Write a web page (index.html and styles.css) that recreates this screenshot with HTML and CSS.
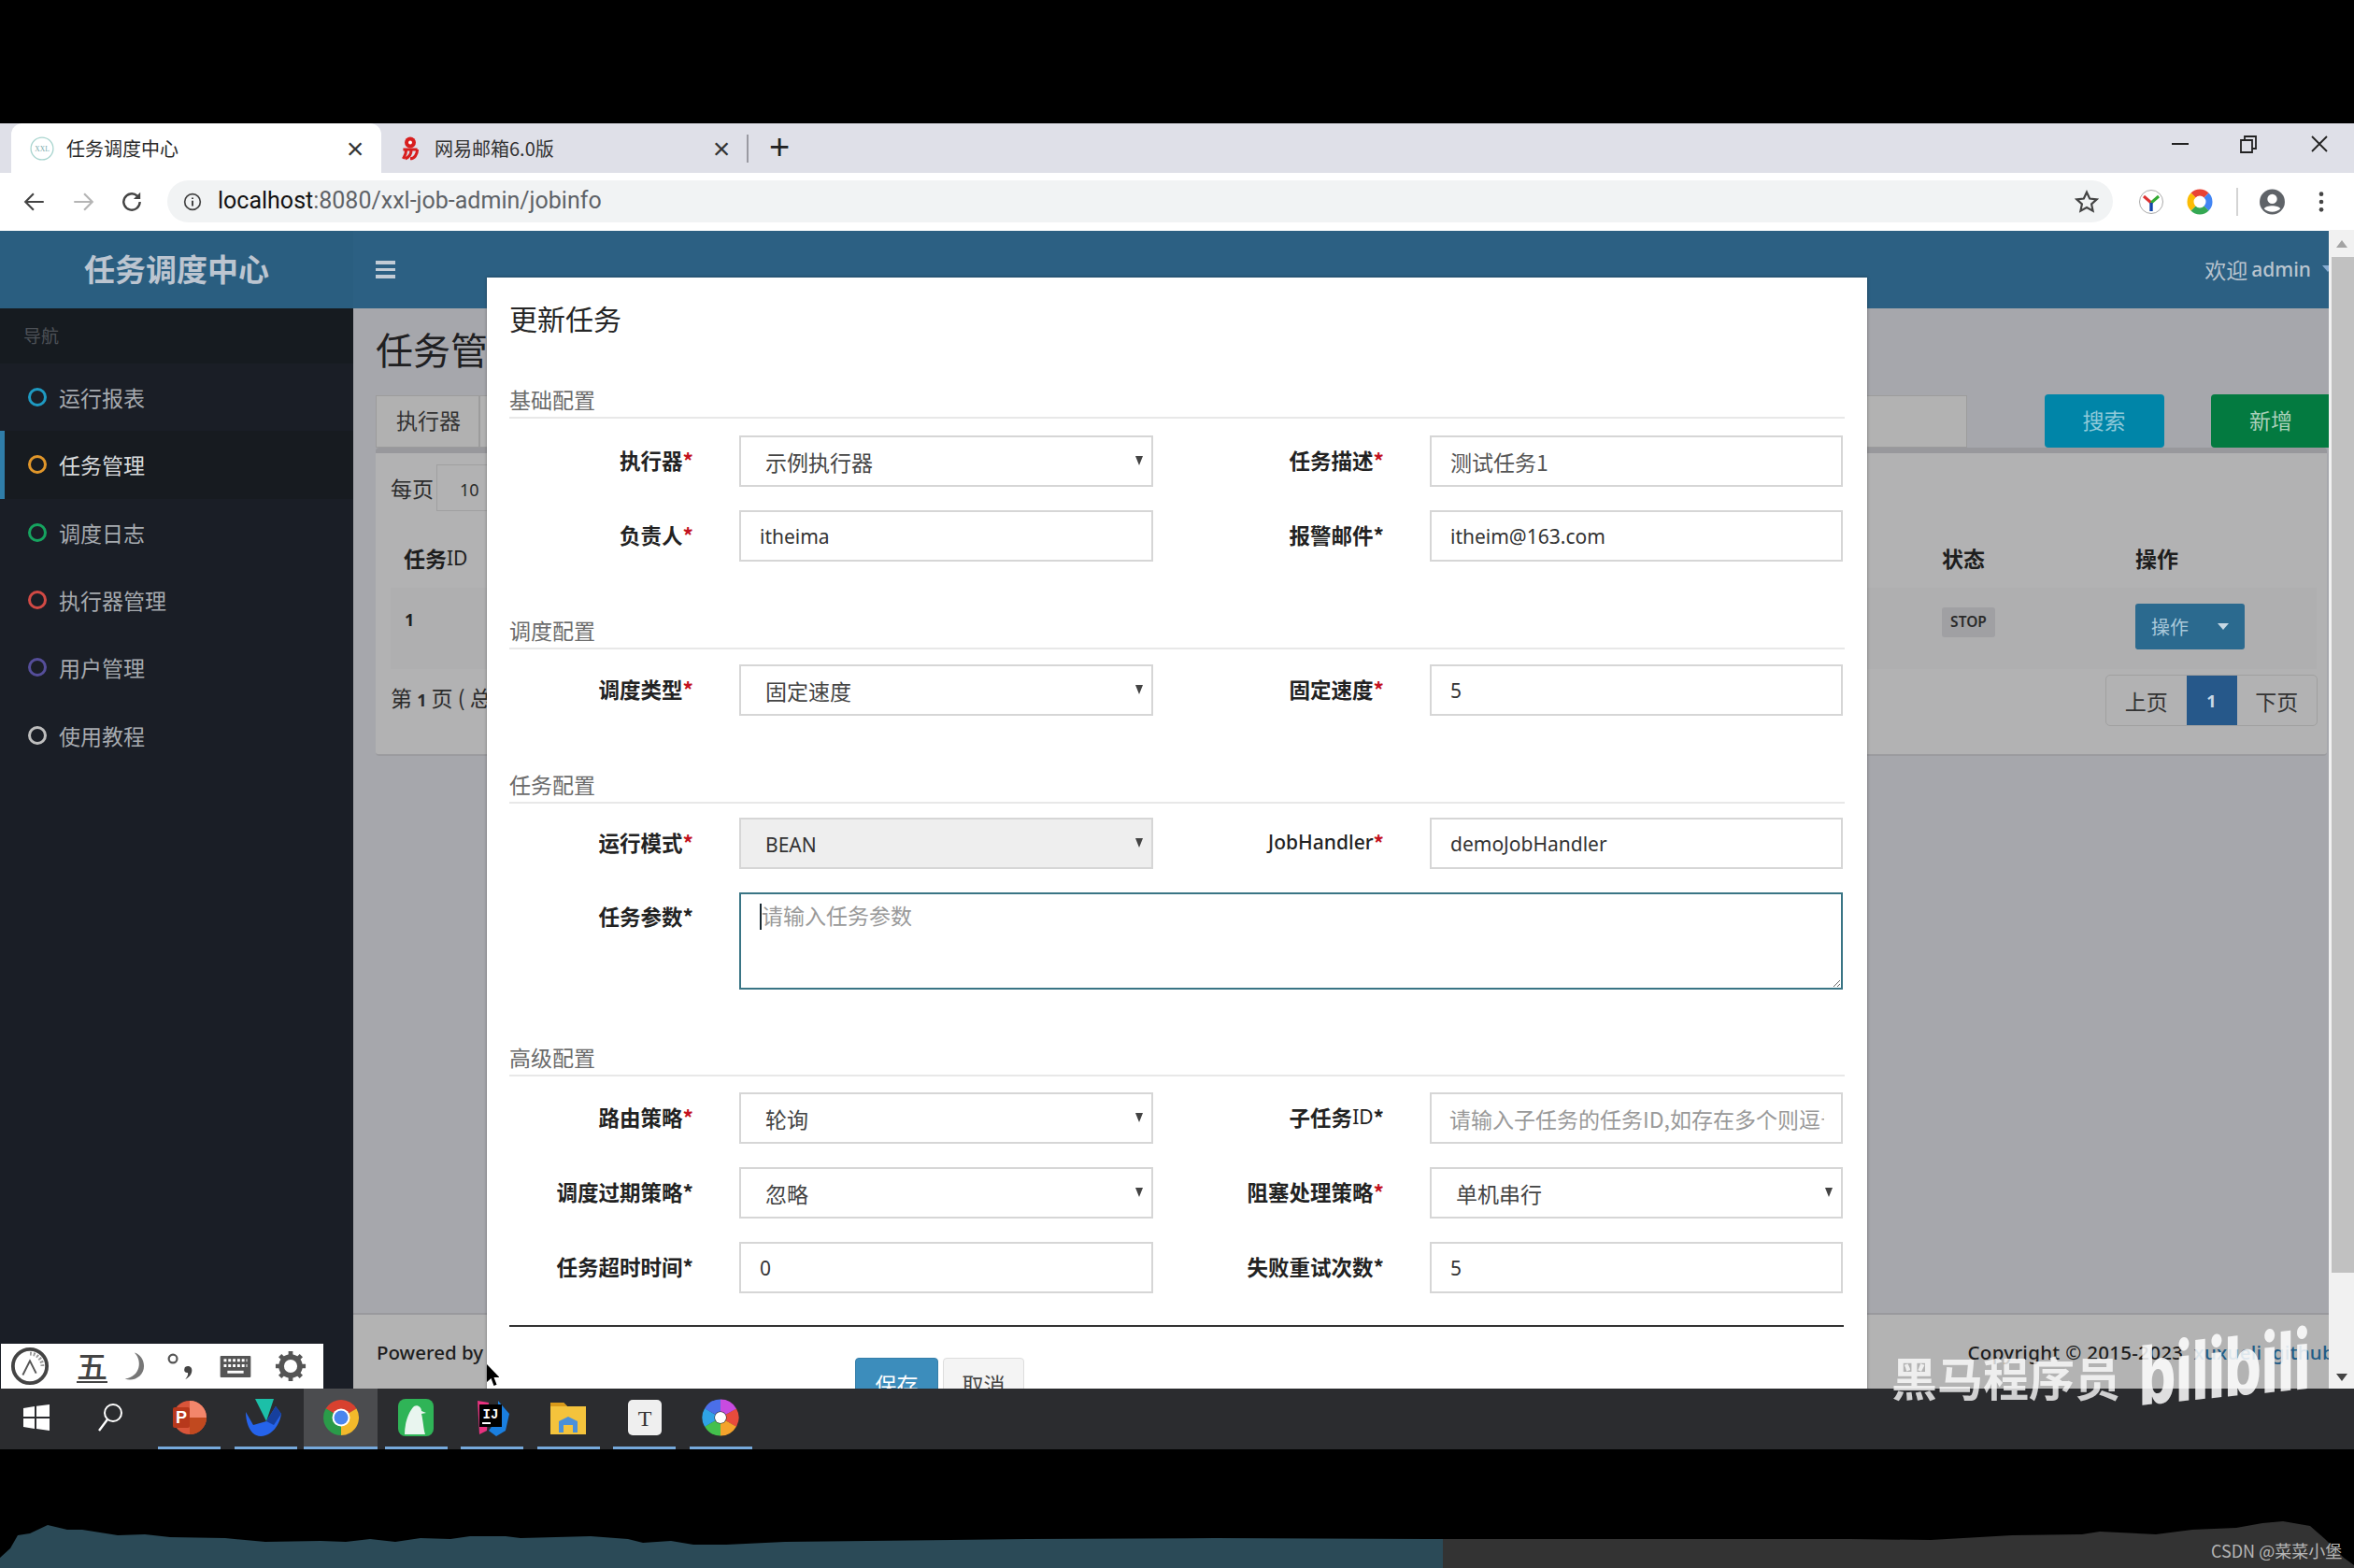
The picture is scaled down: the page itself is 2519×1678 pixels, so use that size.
FILE: index.html
```html
<!DOCTYPE html>
<html lang="zh">
<head>
<meta charset="utf-8">
<title>任务调度中心</title>
<link rel="stylesheet" href="styles.css">
</head>
<body>
<div class="screen">
  <div class="letterbox-top"></div>

  <div class="tabstrip">
    <div class="tab tab-active">
      <svg class="favicon" viewBox="0 0 24 24"><circle cx="12" cy="12" r="11" fill="#fff" stroke="#a9d5cf" stroke-width="1.2"/><text x="12" y="15" font-size="7" text-anchor="middle" fill="#7aa" font-family="Liberation Serif">XXL</text></svg>
      <span class="tab-title">任务调度中心</span>
      <span class="tab-close">×</span>
    </div>
    <div class="tab">
      <svg class="favicon" viewBox="0 0 24 24"><circle cx="12" cy="6" r="5.500" fill="#d81e1e"/><circle cx="12" cy="6" r="1.800" fill="#fff"/><path d="M5 13h14M8 13c0 5-2 7-3 9M13 13c0 5-3 8-6 9M19 13c0 5-3 9-7 9" stroke="#d81e1e" stroke-width="2.800" fill="none"/></svg>
      <span class="tab-title">网易邮箱6.0版</span>
      <span class="tab-close">×</span>
    </div>
    <span class="tab-divider"></span>
    <span class="tab-new">+</span>
    <div class="window-controls">
      <svg class="win-min" viewBox="0 0 20 20"><path d="M1 10h18" stroke="#222" stroke-width="2"/></svg>
      <svg class="win-max" viewBox="0 0 20 20"><path d="M2 6h12v13H2zM6 6V2h12v13h-4" fill="none" stroke="#222" stroke-width="1.800"/></svg>
      <svg class="win-close" viewBox="0 0 20 20"><path d="M2 2l16 16M18 2L2 18" stroke="#222" stroke-width="1.800"/></svg>
    </div>
  </div>

  <div class="toolbar">
    <svg class="nav-icon" viewBox="0 0 24 24"><path d="M21 12H4M11 4l-8 8 8 8" fill="none" stroke="#444" stroke-width="2"/></svg>
    <svg class="nav-icon" viewBox="0 0 24 24"><path d="M3 12h17M13 4l8 8-8 8" fill="none" stroke="#b5b5b5" stroke-width="2"/></svg>
    <svg class="nav-icon" viewBox="0 0 24 24"><path d="M20 12a8 8 0 1 1-2.600-5.900" fill="none" stroke="#444" stroke-width="2.200"/><path d="M20.500 2.500v6.700h-6.700z" fill="#444"/></svg>
    <div class="omnibox">
      <svg class="info-icon" viewBox="0 0 24 24"><circle cx="12" cy="12" r="10" fill="none" stroke="#444" stroke-width="2"/><path d="M12 10.500v7M12 6.500v2" stroke="#444" stroke-width="2.400"/></svg>
      <span class="url"><span class="url-host">localhost</span>:8080/xxl-job-admin/jobinfo</span>
      <svg class="star" viewBox="0 0 24 24"><path d="M12 2.500l2.900 6.300 6.900.8-5.100 4.600 1.400 6.800-6.100-3.400-6.100 3.400 1.400-6.800L2.200 9.600l6.900-.8z" fill="none" stroke="#444" stroke-width="2"/></svg>
    </div>
    <svg class="ext ext-y" viewBox="0 0 28 28"><circle cx="14" cy="14" r="12.500" fill="#fff" stroke="#aaa"/><path d="M14 15L6 8" stroke="#d33" stroke-width="3"/><path d="M14 15L22 8" stroke="#3a3" stroke-width="3"/><path d="M14 15v9" stroke="#14a" stroke-width="3.400"/></svg>
    <svg class="ext ext-ring" viewBox="0 0 28 28"><g fill="none" stroke-width="7"><circle cx="14" cy="14" r="10" stroke="#e94335" stroke-dasharray="15.700 47.100" transform="rotate(-135 14 14)"/><circle cx="14" cy="14" r="10" stroke="#4285f4" stroke-dasharray="15.700 47.100" transform="rotate(-45 14 14)"/><circle cx="14" cy="14" r="10" stroke="#34a853" stroke-dasharray="15.700 47.100" transform="rotate(45 14 14)"/><circle cx="14" cy="14" r="10" stroke="#fbbc05" stroke-dasharray="15.700 47.100" transform="rotate(135 14 14)"/></g></svg>
    <span class="toolbar-divider"></span>
    <svg class="ext ext-user" viewBox="0 0 28 28"><circle cx="14" cy="14" r="13" fill="#5f6368"/><circle cx="14" cy="11" r="5" fill="#fff"/><path d="M5.500 21c2-4 15-4 17 0-4 4.500-13 4.500-17 0z" fill="#fff"/></svg>
    <svg class="ext ext-dots" viewBox="0 0 8 28"><circle cx="4" cy="5" r="2.500" fill="#444"/><circle cx="4" cy="14" r="2.500" fill="#444"/><circle cx="4" cy="23" r="2.500" fill="#444"/></svg>
  </div>

  <div class="viewport">
    <div class="app">
      <header class="topbar">
        <div class="brand">任务调度中心</div>
        <div class="toggle"><i></i><i></i><i></i></div>
        <div class="user">欢迎 <b>admin</b> <span class="user-caret"></span></div>
      </header>
      <div class="app-body">
        <nav class="sidebar">
          <div class="side-head">导航</div>
          <a class="side-item"><span class="ring ring-cyan"></span>运行报表</a>
          <a class="side-item side-active"><span class="ring ring-orange"></span>任务管理</a>
          <a class="side-item"><span class="ring ring-green"></span>调度日志</a>
          <a class="side-item"><span class="ring ring-red"></span>执行器管理</a>
          <a class="side-item"><span class="ring ring-purple"></span>用户管理</a>
          <a class="side-item"><span class="ring ring-white"></span>使用教程</a>
        </nav>
        <main class="main">
          <div class="content">
            <h1 class="page-title">任务管理</h1>
            <div class="filters">
              <div class="filter-label">执行器</div>
              <div class="filter-input"></div>
              <button class="btn-search">搜索</button>
              <button class="btn-add">新增</button>
            </div>
            <section class="card">
              <div class="perpage">每页<span class="perpage-box">10</span></div>
              <div class="table">
                <div class="th th-id">任务<span class="thin">ID</span></div>
                <div class="th">状态</div>
                <div class="th">操作</div>
                <div class="td td-id">1</div>
                <div class="td td-stop"><span class="stop">STOP</span></div>
                <div class="td"><span class="op-btn">操作<i class="op-caret"></i></span></div>
              </div>
              <div class="table-foot">
                <div class="page-info">第 <b>1</b> 页 ( 总共 1 页，1 条记录 )</div>
                <div class="pager"><span class="pg">上页</span><span class="pg pg-on">1</span><span class="pg">下页</span></div>
              </div>
            </section>
          </div>
          <footer class="footer">
            <div class="powered">Powered by <b>XXL-JOB</b> 2.4.0</div>
            <div class="copy">Copyright © 2015-2023 &nbsp;<a>xuxueli</a> &nbsp;<a>github</a></div>
          </footer>
        </main>
      </div>
    </div>
    <div class="scrollbar">
      <span class="sb-arrow"><i class="sb-up"></i></span>
      <span class="sb-thumb"></span>
      <span class="sb-arrow sb-arrow-end"><i class="sb-down"></i></span>
    </div>

    <div class="modal">
      <h2 class="modal-title">更新任务</h2>

      <div class="section section-first">
        <div class="section-head">基础配置</div>
        <div class="form-grid">
          <label class="lab">执行器<em>*</em></label>
          <div class="sel"><select><option>示例执行器</option></select></div>
          <label class="lab">任务描述<em>*</em></label>
          <input class="ctl ctl-cjk" value="测试任务1">
          <label class="lab">负责人<em>*</em></label>
          <input class="ctl" value="itheima">
          <label class="lab">报警邮件*</label>
          <input class="ctl" value="itheim@163.com">
        </div>
      </div>

      <div class="section">
        <div class="section-head">调度配置</div>
        <div class="form-grid">
          <label class="lab">调度类型<em>*</em></label>
          <div class="sel"><select><option>固定速度</option></select></div>
          <label class="lab">固定速度<em>*</em></label>
          <input class="ctl" value="5">
        </div>
      </div>

      <div class="section section-tight">
        <div class="section-head">任务配置</div>
        <div class="form-grid">
          <label class="lab">运行模式<em>*</em></label>
          <div class="sel sel-off"><select disabled><option>BEAN</option></select></div>
          <label class="lab"><span class="lab-latin">JobHandler</span><em>*</em></label>
          <input class="ctl" value="demoJobHandler">
          <label class="lab lab-top">任务参数*</label>
          <div class="area-wrap"><textarea class="area" placeholder="请输入任务参数"></textarea><span class="caret"></span></div>
        </div>
      </div>

      <div class="section section-last">
        <div class="section-head">高级配置</div>
        <div class="form-grid">
          <label class="lab">路由策略<em>*</em></label>
          <div class="sel"><select><option>轮询</option></select></div>
          <label class="lab">子任务<span class="lab-thin">ID</span>*</label>
          <input class="ctl ctl-cjk ctl-hold" placeholder="请输入子任务的任务ID,如存在多个则逗号分隔">
          <label class="lab">调度过期策略*</label>
          <div class="sel"><select><option>忽略</option></select></div>
          <label class="lab">阻塞处理策略<em>*</em></label>
          <div class="sel"><select><option>单机串行</option></select></div>
          <label class="lab">任务超时时间*</label>
          <input class="ctl" value="0">
          <label class="lab">失败重试次数*</label>
          <input class="ctl" value="5">
        </div>
      </div>

      <hr class="modal-rule">
      <div class="modal-actions">
        <button class="btn-save">保存</button>
        <button class="btn-cancel">取消</button>
      </div>
    </div>

    <div class="ime">
      <svg class="ime-clock" viewBox="0 0 44 44"><circle cx="22" cy="22" r="19" fill="#fff" stroke="#444" stroke-width="4"/><path d="M22 8a14 14 0 0 1 14 14" fill="none" stroke="#999" stroke-width="4" stroke-dasharray="2 2"/><path d="M14 32l8-16 7 14" fill="none" stroke="#555" stroke-width="2"/></svg>
      <span class="ime-wu">五</span>
      <svg class="ime-moon" viewBox="0 0 30 40"><path d="M16 3c10 10 8 30-12 33 12 4 24-4 24-16C28 12 23 5 16 3z" fill="#777"/></svg>
      <svg class="ime-punct" viewBox="0 0 34 36"><circle cx="8" cy="9" r="5" fill="none" stroke="#555" stroke-width="2.500"/><path d="M26 18c4 0 5 3 5 5 0 6-5 9-8 11 2-3 4-5 3-8-3 0-5-2-4-5 0-2 2-3 4-3z" fill="#444"/></svg>
      <svg class="ime-keys" viewBox="0 0 36 26"><rect x="1" y="1" width="34" height="24" fill="#555" rx="1"/><path d="M5 6h26M5 12h26" stroke="#fff" stroke-width="3" stroke-dasharray="3 2"/><path d="M9 19h18" stroke="#fff" stroke-width="3"/></svg>
      <svg class="ime-gear" viewBox="0 0 36 36"><circle cx="18" cy="18" r="10.500" fill="none" stroke="#555" stroke-width="6"/><path d="M18 1v7M18 28v7M1 18h7M28 18h7M6 6l5 5M25 25l5 5M30 6l-5 5M11 25l-5 5" stroke="#555" stroke-width="5"/></svg>
    </div>

    <svg class="cursor" viewBox="0 0 14 24"><path d="M1 0v19l4.500-4 3 8 3-1.300-3-7.700h6z" fill="#000"/></svg>
  </div>

  <div class="taskbar">
    <div class="tb-start">
      <svg class="tb-win" viewBox="0 0 28 28"><path d="M0 4l12-2v11H0zM14 1.700L28 0v13H14zM0 15h12v11L0 24zM14 15h14v13l-14-2z" fill="#fff"/></svg>
    </div>
    <div class="tb-search">
      <svg class="tb-glass" viewBox="0 0 28 32"><circle cx="17" cy="11" r="9" fill="none" stroke="#fff" stroke-width="2"/><path d="M11 18L2 30" stroke="#fff" stroke-width="2.400"/></svg>
    </div>
    <div class="slot">
      <svg class="app" viewBox="0 0 40 40"><circle cx="20" cy="20" r="18" fill="#d9553a"/><path d="M20 2a18 18 0 0 1 18 18H20z" fill="#f3866b"/><path d="M20 20h18a18 18 0 0 1-18 18z" fill="#c1491f"/><rect x="2" y="9" width="18" height="22" rx="2" fill="#b7381c"/><text x="11" y="26" font-size="18" font-weight="700" text-anchor="middle" fill="#fff" font-family="Liberation Sans">P</text></svg>
    </div>
    <div class="slot">
      <svg class="app app-left" viewBox="0 0 40 40"><path d="M12 0h20l-8 24z" fill="#1cbfa8"/><path d="M2 14l8 14 14-4L34 8l6 8c-2 14-12 24-22 24C8 40 2 28 2 14z" fill="#2563eb"/><path d="M24 24L34 8l6 8-8 12z" fill="#163f9d"/></svg>
    </div>
    <div class="slot slot-active">
      <svg class="app" viewBox="0 0 40 40"><g fill="none" stroke-width="12"><circle cx="20" cy="20" r="13" stroke="#d8412f" stroke-dasharray="27.230 54.460" transform="rotate(-150 20 20)"/><circle cx="20" cy="20" r="13" stroke="#f2b92b" stroke-dasharray="27.230 54.460" transform="rotate(-30 20 20)"/><circle cx="20" cy="20" r="13" stroke="#2a9b49" stroke-dasharray="27.230 54.460" transform="rotate(90 20 20)"/></g><circle cx="20" cy="20" r="9.500" fill="#fff"/><circle cx="20" cy="20" r="7.500" fill="#4a85ee"/></svg>
    </div>
    <div class="slot">
      <svg class="app" viewBox="0 0 40 40"><rect x="1" y="0" width="38" height="40" rx="8" fill="#2fb457"/><path d="M18 8c4-2 8 1 8 5l5 2-5 1c2 8 2 16 4 22H8c0-12 4-24 10-30z" fill="#e9f5ef"/></svg>
    </div>
    <div class="slot">
      <svg class="app" viewBox="0 0 40 40"><path d="M4 2l12 2-2 30-8 4z" fill="#e8327f"/><path d="M26 2l12 14-4 18-10 6-8-6 10-14z" fill="#1a7fe0"/><rect x="6" y="6" width="24" height="24" fill="#000"/><text x="18" y="21" font-size="14" font-weight="700" text-anchor="middle" fill="#fff" font-family="Liberation Mono">IJ</text><rect x="9" y="25" width="9" height="2" fill="#fff"/></svg>
    </div>
    <div class="slot">
      <svg class="app" viewBox="0 0 40 40"><path d="M1 4h14l4 4h20v30H1z" fill="#f4c33c"/><path d="M1 4h14l4 4H1z" fill="#d99a1a"/><path d="M10 36V24l10-5 10 5v12z" fill="#4a90d9"/><rect x="15" y="28" width="10" height="8" fill="#f4c33c"/></svg>
    </div>
    <div class="slot">
      <svg class="app" viewBox="0 0 40 40"><rect x="2" y="1" width="36" height="38" rx="5" fill="#efefef"/><text x="20" y="29" font-size="24" text-anchor="middle" fill="#333" font-family="Liberation Serif">T</text></svg>
    </div>
    <div class="slot">
      <svg class="app" viewBox="0 0 40 40"><g fill="none" stroke-width="13"><circle cx="20" cy="20" r="13" stroke="#e84b3c" stroke-dasharray="13.610 68.070" transform="rotate(-30 20 20)"/><circle cx="20" cy="20" r="13" stroke="#f4a32c" stroke-dasharray="13.610 68.070" transform="rotate(30 20 20)"/><circle cx="20" cy="20" r="13" stroke="#43c04c" stroke-dasharray="13.610 68.070" transform="rotate(90 20 20)"/><circle cx="20" cy="20" r="13" stroke="#2fa3e6" stroke-dasharray="13.610 68.070" transform="rotate(150 20 20)"/><circle cx="20" cy="20" r="13" stroke="#4b6fe8" stroke-dasharray="13.610 68.070" transform="rotate(210 20 20)"/><circle cx="20" cy="20" r="13" stroke="#c84be0" stroke-dasharray="13.610 68.070" transform="rotate(270 20 20)"/></g><circle cx="20" cy="20" r="6" fill="#fff"/></svg>
    </div>
  </div>

  <div class="letterbox-bottom">
    <svg class="wave" viewBox="0 0 2519 127" preserveAspectRatio="none">
      <path fill="#2b4a57" d="M0 116L11 106 19 92 32 90 51 81 72 86 88 86 126 92 155 91 182 94 241 95 284 99 343 98 370 99 396 96 423 99 450 95 482 96 503 93 541 93 557 95 632 93 672 96 688 100 718 98 742 102 777 102 840 99 1100 96 1300 95 1544 96V127H0z"/>
      <path fill="#333" d="M1544 96L1900 96 1979 96 2066 97 2153 92 2228 91 2247 88 2307 91 2346 86 2393 84 2421 79 2443 77 2472 82 2488 96 2508 116 2519 124V127H1544z"/>
    </svg>
    <span class="csdn">CSDN @菜菜小堡</span>
  </div>

  <div class="watermark">
    <span class="wm-cn">黑马程序员</span>
    <span class="wm-logo">bilibili</span>
  </div>
</div>
</body>
</html>
```

FILE: styles.css
```css
* { box-sizing: border-box; }
html, body { margin: 0; padding: 0; background: #000; }
body { font-family: "Noto Sans", "Noto Sans CJK SC", sans-serif; color: #222; }

.screen { position: relative; width: 2519px; height: 1678px; overflow: hidden; display: flex; flex-direction: column; background: #000; }
.letterbox-top { height: 132px; background: #000; flex: none; }

/* browser tabs */
.tabstrip { height: 53px; flex: none; background: #dfe0e8; display: flex; align-items: stretch; padding-left: 12px; position: relative; }
.tab { width: 396px; display: flex; align-items: center; padding-left: 20px; padding-right: 16px; font-family: "Noto Sans CJK SC", sans-serif; font-size: 20px; color: #333; }
.tab + .tab { width: 391px; padding-left: 18px; padding-right: 15px; }
.tab-active { background: #fff; border-radius: 12px 12px 0 0; color: #2a2a2a; }
.favicon { width: 26px; height: 26px; margin-right: 13px; flex: none; }
.tab-title { flex: 1; white-space: nowrap; }
.tab-close { font-family: "Liberation Sans", sans-serif; font-size: 32px; line-height: 1; color: #333; width: 24px; text-align: center; }
.tab-divider { width: 2px; height: 30px; background: #9a9aa2; align-self: center; }
.tab-new { font-family: "Liberation Sans", sans-serif; font-size: 38px; line-height: 50px; margin-left: 22px; color: #222; font-weight: 400; }
.window-controls { margin-left: auto; display: flex; align-items: center; height: 44px; padding-right: 27px; gap: 56px; }
.win-min, .win-max, .win-close { width: 20px; height: 20px; }
.win-min { margin-right: -3px; }

/* browser toolbar */
.toolbar { height: 61px; flex: none; background: #fff; display: flex; align-items: center; padding-left: 24px; }
.nav-icon { width: 26px; height: 26px; margin-right: 26px; flex: none; }
.omnibox { width: 2082px; height: 45px; margin-left: -1px; background: #f1f3f4; border-radius: 23px; display: flex; align-items: center; padding-left: 17px; }
.info-icon { width: 20px; height: 20px; margin-right: 17px; flex: none; }
.url { font-family: "Roboto", sans-serif; font-size: 25px; line-height: 43px; padding-bottom: 2px; color: #5f6368; white-space: nowrap; flex: 1; }
.url-host { color: #111; }
.star { width: 26px; height: 26px; margin-right: 15px; }
.ext { flex: none; }
.ext-y { width: 28px; height: 30px; margin-left: 27px; }
.ext-ring { width: 28px; height: 30px; margin-left: 24px; }
.toolbar-divider { width: 2px; height: 30px; background: #d4d4d4; margin-left: 25px; }
.ext-user { width: 29px; height: 32px; margin-left: 22px; }
.ext-dots { width: 8px; height: 26px; margin-left: 34px; }

/* page viewport */
.viewport { height: 1240px; flex: none; position: relative; display: flex; overflow: hidden; }
.app { flex: 1; min-width: 0; display: flex; flex-direction: column; }
.topbar { height: 84px; flex: none; background: #2c6083; display: flex; align-items: center; color: #b9c4cf; border-top: 1px solid #fff; }
.brand { width: 378px; text-align: center; font-size: 33px; font-weight: 700; color: #bcc5d0; background: #2a5e80; height: 100%; line-height: 81px; font-family: "Noto Sans CJK SC", sans-serif; }
.toggle { margin-left: 24px; width: 21px; display: flex; flex-direction: column; gap: 4px; }
.toggle i { height: 3.500px; background: #c2ccd6; display: block; }
.user { margin-left: auto; font-size: 23px; white-space: nowrap; font-family: "Noto Sans CJK SC", sans-serif; display: flex; align-items: center; gap: 4px; margin-right: -5px; padding-bottom: 2px; }
.user b { font-family: "Noto Sans", sans-serif; font-weight: 500; font-size: 21px; }
.user-caret { width: 0; height: 0; border: 6px solid transparent; border-top: 7px solid #85aad0; border-bottom: 0; margin-left: 8px; }

.app-body { flex: 1; display: flex; min-height: 0; }
.sidebar { width: 378px; flex: none; background: #1a1e26; font-family: "Noto Sans CJK SC", sans-serif; }
.side-head { height: 59px; background: #161b20; color: #4d5157; font-size: 19px; padding-left: 25px; line-height: 58px; }
.side-item { height: 72.300px; display: flex; align-items: center; border-left: 5px solid transparent; padding-left: 25px; gap: 13px; font-size: 23px; color: #a6aaaf; }
.side-active { border-left-color: #2f7da8; background: #171b20; color: #d8dadc; }
.ring { width: 20px; height: 20px; border-radius: 50%; border: 3.500px solid #999; flex: none; }
.ring-cyan { border-color: #1e9ac2; }
.ring-orange { border-color: #e0962a; }
.ring-green { border-color: #16a35f; }
.ring-red { border-color: #d24a45; }
.ring-purple { border-color: #554e9a; }
.ring-white { border-color: #bdbdbd; }

.main { flex: 1; min-width: 0; display: flex; flex-direction: column; background: #a6a7ac; overflow: hidden; }
.content { flex: 1; padding-left: 24px; font-family: "Noto Sans CJK SC", sans-serif; font-size: 23px; color: #2b2b2b; min-height: 0; }
.page-title { margin: 23px 0 0; font-size: 40px; line-height: 40px; font-weight: 400; color: #202022; }
.filters { margin-top: 30px; height: 56px; display: flex; align-items: stretch; }
.filter-label { width: 111px; background: #b1b1b1; border: 1px solid #9c9c9c; display: flex; align-items: center; justify-content: center; color: #333; padding-bottom: 5px; padding-left: 2px; }
.filter-input { width: 1592px; background: #b2b2b2; border: 1px solid #9c9c9c; }
.btn-search, .btn-add { border: 0; border-radius: 4px; font: inherit; height: 57px; margin-top: -1px; padding-bottom: 5px; }
.btn-search { width: 128px; margin-left: 83px; background: #0085a8; color: #8fc9d9; padding-left: 5px; }
.btn-add { width: 126px; margin-left: 50px; background: #037a40; color: #a9d0b9; border-radius: 4px 0 0 4px; padding-left: 8px; }

.card { background: #b2b2b3; margin-right: 2px; height: 330px; border-top: 6px solid #98989c; border-bottom: 2px solid #9b9b9f; padding: 13px 13px 0 16px; border-radius: 4px; }
.perpage { display: flex; align-items: center; height: 50px; gap: 3px; padding-bottom: 2px; }
.perpage-box { width: 100px; height: 50px; border: 1px solid #a0a0a0; font-family: "Noto Sans", sans-serif; font-size: 18px; padding-left: 24px; display: flex; align-items: center; padding-top: 4px; }
.table { display: grid; grid-template-columns: 1660px 207px 1fr; grid-template-rows: 60px 87px; margin-top: 21px; width: 2061px; }
.th { font-weight: 700; color: #1e1e1e; font-size: 23px; display: flex; align-items: center; padding-bottom: 4px; }
.th-id { padding-left: 14px; }
.thin { font-weight: 400; font-family: "Noto Sans", sans-serif; font-size: 21px; }
.td { background: #afafb0; padding-top: 19px; }
.td-id { padding-left: 15px; font-weight: 700; font-size: 18px; font-family: "Noto Sans", sans-serif; padding-top: 22px; color: #1e1e1e; }
.td-stop { padding-top: 15px; }
.stop { display: inline-block; width: 57px; height: 32px; background: #a0a0a3; border-radius: 3px; font-family: "Noto Sans", sans-serif; font-size: 15.500px; font-weight: 600; color: #2a2a2a; text-align: center; line-height: 31px; }
.op-btn { display: flex; width: 117px; height: 49px; margin-top: -2px; background: #2b6a8f; border-radius: 3px; color: #a9c8da; align-items: center; font-size: 20px; padding-left: 17px; }
.op-caret { width: 0; height: 0; border: 6.500px solid transparent; border-top: 7px solid #c7d8e4; border-bottom: 0; margin-left: 31px; }
.table-foot { display: flex; justify-content: space-between; margin-top: 6px; width: 2062px; }
.page-info { line-height: 48px; white-space: nowrap; }
.page-info b { font-family: "Noto Sans", sans-serif; font-size: 18px; }
.pager { display: flex; height: 55px; border: 1px solid #a0a0a0; border-radius: 5px; width: 227px; overflow: hidden; }
.pg { flex: 1; display: flex; align-items: center; justify-content: center; color: #333; }
.pg-on { flex: 0 0 54px; background: #26588a; color: #c9d8e6; font-weight: 700; font-family: "Noto Sans", sans-serif; font-size: 18px; }

.footer { height: 81px; flex: none; background: #b3b3b3; border-top: 2px solid #99999d; padding-left: 25px; display: flex; justify-content: space-between; align-items: center; white-space: nowrap; font-size: 20.500px; color: #1d1d1d; font-weight: 500; overflow: hidden; }
.footer a { color: #1f5c86; }
.copy { flex: none; margin-right: -6px; letter-spacing: .3px; }

.scrollbar { width: 27px; flex: none; background: #f1f1f1; display: flex; flex-direction: column; align-items: stretch; }
.sb-arrow { height: 29px; flex: none; display: flex; align-items: center; justify-content: center; }
.sb-arrow-end { margin-top: auto; padding-top: 4px; }
.sb-thumb { height: 1087px; background: #c1c1c1; margin-left: 3px; }
.sb-up { width: 0; height: 0; border: 6px solid transparent; border-bottom: 8px solid #a3a3a3; border-top: 0; }
.sb-down { width: 0; height: 0; border: 6px solid transparent; border-top: 8px solid #444; border-bottom: 0; }

/* modal over the page */
.modal { position: absolute; left: 521px; top: 51px; width: 1477px; background: #fff; padding: 0 24px 0 24px; box-shadow: 0 0 3px rgba(0,0,0,.4); font-family: "Noto Sans CJK SC", sans-serif; }
.modal-title { margin: 0; padding-top: 28px; font-size: 30px; line-height: 30px; font-weight: 400; color: #262626; height: 60px; }
.section { margin-top: 58px; }
.section-first { margin-top: 55px; }
.section-last { margin-top: 57px; }
.section-head { font-size: 23px; line-height: 30px; color: #6b6b6b; padding-bottom: 4px; border-bottom: 2px solid #e8e8e8; }
.form-grid { display: grid; grid-template-columns: 246px 443px 296px 442px; row-gap: 25px; margin-top: 16px; grid-auto-rows: 55px; }
.section-first .form-grid { margin-top: 18px; }
.section-tight .form-grid { margin-top: 15px; grid-template-rows: 55px 104px; }
.section-last .form-grid { margin-top: 17px; }
.lab { display: flex; align-items: center; justify-content: flex-end; padding-right: 49px; padding-bottom: 3px; font-size: 22.500px; font-weight: 700; color: #222; white-space: nowrap; }
.lab em { color: #c3121f; font-style: normal; }
.lab-latin { font-family: "Noto Sans", sans-serif; font-weight: 500; font-size: 21px; }
.lab-thin { font-family: "Noto Sans", sans-serif; font-weight: 400; font-size: 21px; }
.lab-top { align-items: flex-start; padding-top: 9px; }
.ctl { width: 100%; height: 100%; border: 2px solid #d6d6d6; padding: 0 20px; background: #fff; font-family: "Noto Sans", "Noto Sans CJK SC", sans-serif; font-size: 21px; color: #333; border-radius: 0; outline: 0; }
.ctl-cjk { font-family: "Noto Sans CJK SC", sans-serif; font-size: 23px; color: #555; }
.ctl-hold { padding: 0 18px 0 19px; }
.ctl::placeholder { color: #999; opacity: 1; }
.sel { position: relative; }
.sel select { width: 100%; height: 100%; appearance: none; -webkit-appearance: none; border: 2px solid #d6d6d6; border-radius: 0; background: #fff; padding: 2px 30px 0 26px; font-family: "Noto Sans", "Noto Sans CJK SC", sans-serif; font-size: 23px; color: #444; outline: 0; opacity: 1; }
.sel::after { content: ""; position: absolute; right: 11px; top: 22px; width: 0; height: 0; border: 4.500px solid transparent; border-top: 10px solid #444; border-bottom: 0; }
.sel-off select { background: #eee; color: #333; font-size: 21px; }
.area-wrap { grid-column: 2 / 5; position: relative; }
.area { display: block; width: 100%; height: 100%; border: 2px solid #3a7585; padding: 5px 22px; background: #fff; font-family: "Noto Sans CJK SC", sans-serif; font-size: 23px; line-height: 34px; outline: 0; border-radius: 0; }
.area::placeholder { color: #999; opacity: 1; }
.caret { position: absolute; left: 22px; top: 12px; width: 2px; height: 28px; background: #1a2a33; }

.modal-rule { margin: 34px 0 0; border: 0; border-top: 2px solid #333; width: 1428px; }
.modal-actions { display: flex; margin-top: 33px; padding-left: 370px; gap: 5px; }
.btn-save, .btn-cancel { height: 56px; font-family: "Noto Sans CJK SC", sans-serif; font-size: 23px; border-radius: 4px; padding: 0; }
.btn-save { width: 89px; background: #3c8dbc; color: #fff; border: 1px solid #367fa9; }
.btn-cancel { width: 87px; background: #f4f4f4; color: #444; border: 1px solid #ddd; }

/* IME bar over the page */
.ime { position: absolute; left: 1px; bottom: 0; width: 345px; height: 48px; background: #fff; display: flex; align-items: center; padding-left: 10px; }
.ime-clock { width: 42px; height: 42px; flex: none; }
.ime-wu { font-family: "Noto Sans CJK SC", sans-serif; font-size: 33px; font-weight: 500; color: #444; margin-left: 29px; line-height: 1; border-bottom: 2px solid #444; flex: none; }
.ime-moon { width: 26px; height: 34px; margin-left: 15px; flex: none; }
.ime-punct { width: 30px; height: 32px; margin-left: 22px; flex: none; }
.ime-keys { width: 36px; height: 25px; margin-left: 26px; flex: none; }
.ime-gear { width: 34px; height: 34px; margin-left: 24px; flex: none; }

.cursor { position: absolute; left: 520px; top: 1214px; width: 14px; height: 24px; }

/* taskbar */
.taskbar { height: 65px; flex: none; background: #2b2c2f; display: flex; align-items: stretch; }
.tb-start { width: 78px; display: flex; align-items: center; justify-content: center; padding-bottom: 4px; }
.tb-win { width: 28px; height: 28px; }
.tb-search { width: 80px; margin-right: 11px; display: flex; align-items: center; justify-content: center; padding-bottom: 4px; }
.tb-glass { width: 28px; height: 32px; }
.slot { width: 67px; margin-right: 14.500px; display: flex; align-items: center; justify-content: center; border-bottom: 3px solid #76a9dc; }
.slot-active { width: 79px; margin-left: -7px; margin-right: 7.500px; background: #4b4c4f; }
.taskbar .app { width: 40px; height: 40px; flex: none; display: block; }
.taskbar .app-left { margin-right: 6px; }

/* bottom band */
.letterbox-bottom { height: 127px; flex: none; position: relative; background: #000; }
.wave { display: block; width: 2519px; height: 127px; }
.csdn { position: absolute; left: 2366px; top: 96px; font-family: "Noto Sans CJK SC", sans-serif; font-size: 18px; line-height: 24px; color: #b5b5b5; white-space: nowrap; }

.watermark { position: absolute; left: 2024px; top: 1423px; width: 470px; height: 82px; color: rgba(255,255,255,.78); pointer-events: none; }
.wm-cn { position: absolute; left: 0; top: 22px; font-family: "Noto Sans CJK SC", sans-serif; font-size: 49px; line-height: 56px; font-weight: 700; white-space: nowrap; }
.wm-logo { position: absolute; left: 265px; top: -11px; font-family: "Inter", sans-serif; font-size: 88px; line-height: 120px; font-weight: 800; white-space: nowrap; transform: scaleX(.7) skewY(-4deg); transform-origin: left center; color: rgba(255,255,255,.85); }
```
